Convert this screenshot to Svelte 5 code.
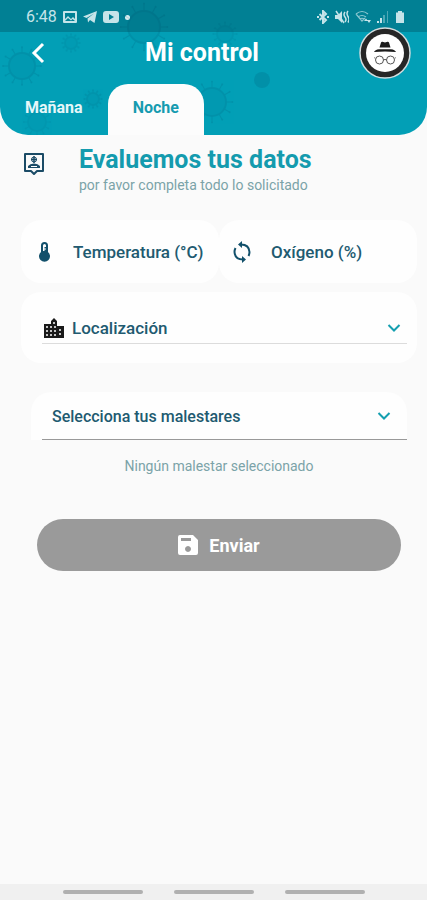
<script>
  // Active period of the day
  let activeTab = $state('noche');

  // Form values
  let temperature = $state('');
  let oxygen = $state('');
  let place = $state('');
  let symptom = $state('');

  const tabs = [
    { id: 'manana', label: 'Mañana' },
    { id: 'noche', label: 'Noche' }
  ];

  const places = ['Casa', 'Trabajo', 'Hospital'];
  const symptoms = ['Fiebre', 'Tos', 'Dolor de cabeza'];

  // Background viruses: centre, radius, opacity
  const viruses = [
    { x: 22, y: 66, r: 13, o: 0.13 },
    { x: 71, y: 43, r: 6, o: 0.08 },
    { x: 144, y: 27, r: 16, o: 0.14 },
    { x: 93, y: 99, r: 6, o: 0.1 },
    { x: 37, y: 122, r: 9, o: 0.07 },
    { x: 212, y: 102, r: 14, o: 0.13 },
    { x: 225, y: 34, r: 8, o: 0.08 }
  ];
  const spikes = [0, 30, 60, 90, 120, 150, 180, 210, 240, 270, 300, 330];

  let canSend = $derived(temperature !== '' && oxygen !== '' && place !== '');
</script>

<div class="screen">
  <header class="top">
    <svg class="viruses" width="427" height="135" viewBox="0 0 427 135" aria-hidden="true">
      {#each viruses as v}
        <g transform="translate({v.x} {v.y})" opacity={v.o} stroke="#003c5c" fill="#003c5c">
          <circle r={v.r} fill-opacity="0.4" stroke-width="2" />
          {#each spikes as angle}
            <g transform="rotate({angle})">
              <line y1={-v.r} y2={-v.r * 1.4} stroke-width="1" />
              <circle cy={-v.r * 1.45} r="1" stroke="none" />
            </g>
          {/each}
        </g>
      {/each}
      <circle cx="262" cy="80" r="8" fill="#003c5c" opacity="0.15" />
    </svg>

    <!-- System status bar -->
    <div class="status">
      <span class="clock">6:48</span>
      <svg width="14" height="12" viewBox="0 0 14 12">
        <path fill="currentColor" fill-rule="evenodd" d="M1 0h12q1 0 1 1v10q0 1-1 1H1q-1 0-1-1V1q0-1 1-1zM2 2v6l3-3 3 3 2-2 2 2V2zM2 10h10L9.500 8 8 9.500 5 7z" />
      </svg>
      <svg width="14" height="12" viewBox="0 0 14 12">
        <path fill="currentColor" d="M14 0 11.500 12 7 9 5 11.500 4.500 7.500 11 2.500 3.500 7 0 5.500z" />
      </svg>
      <svg width="16" height="12" viewBox="0 0 16 12">
        <path fill="currentColor" fill-rule="evenodd" d="M3 0h10q3 0 3 3v6q0 3-3 3H3q-3 0-3-3V3q0-3 3-3zM6 3v6l5-3z" />
      </svg>
      <span class="dot"></span>
      <span class="spacer"></span>
      <svg width="12" height="14" viewBox="0 0 12 14">
        <path fill="none" stroke="currentColor" stroke-width="2" d="M2.500 4 9 10 6 13V1l3 3-6.500 6" />
        <path fill="currentColor" d="M0 6h2v2H0zM10 6h2v2h-2z" />
      </svg>
      <svg width="14" height="14" viewBox="0 0 14 14">
        <path fill="currentColor" d="M0 5h3l4-4v12L3 9H0z" />
        <path fill="none" stroke="currentColor" stroke-width="1.500" d="M1 1l8 12M10 2q-2 2.500 0 5t0 5M13 1q-2 2.500 0 5.500t0 6" />
      </svg>
      <svg width="16" height="14" viewBox="0 0 16 14">
        <path fill="none" stroke="currentColor" stroke-width="1.200" opacity="0.7" d="M1 4q6-5 12 0M3 7q4-3 8 0M5 9q2-1.500 4 0M1 4l6 7 3-3" />
        <path fill="currentColor" d="M9 11l2-2.500 2 2.500zM12 10h4l-2 3z" />
      </svg>
      <svg width="12" height="14" viewBox="0 0 12 14">
        <path fill="currentColor" d="M0 11h2v2H0zM3 8h2v5H3z" />
        <path fill="currentColor" opacity="0.4" d="M6 5h2v8H6zM10 1h1v12h-1z" />
      </svg>
      <svg class="battery" width="10" height="14" viewBox="0 0 10 14">
        <path fill="currentColor" d="M3 1h4v1.500h2V13H1V2.500h2z" />
      </svg>
    </div>

    <div class="bar">
      <button class="back" aria-label="Volver">
        <svg width="14" height="22" viewBox="0 0 14 22">
          <path fill="none" stroke="#fff" stroke-width="3" d="M12 2 3 11l9 9" />
        </svg>
      </button>
      <h1>Mi control</h1>
      <button class="avatar" aria-label="Perfil">
        <svg width="52" height="52" viewBox="0 0 52 52">
          <circle cx="26" cy="26" r="25" fill="#262626" stroke="#d3dcde" stroke-width="1.500" />
          <circle cx="26" cy="26" r="19" fill="#fff" />
          <path fill="#1c1c1c" d="M20.500 20.500 22 15.500q.5-1 1.500-.7l2.500.7 2.500-.7q1-.3 1.500.7l1.500 5zM15 25q1-2.300 5-2.800h12q4 .5 5 2.800-11-1.200-22 0z" />
          <path fill="none" stroke="#555" stroke-width="1" d="M24.500 33q1.500-1.200 3 0M16 31.500l-.5-1M36 31.500l.5-1" />
          <circle cx="20.500" cy="33" r="4" fill="none" stroke="#555" stroke-width="1" />
          <circle cx="31.500" cy="33" r="4" fill="none" stroke="#555" stroke-width="1" />
        </svg>
      </button>
    </div>

    <nav class="tabs">
      {#each tabs as tab}
        <button class="tab" class:active={activeTab === tab.id} onclick={() => (activeTab = tab.id)}>
          {tab.label}
        </button>
      {/each}
    </nav>
  </header>

  <main>
    <section class="intro">
      <svg width="20" height="23" viewBox="0 0 20 23">
        <path fill="none" stroke="#1b4b66" stroke-width="2" stroke-linejoin="round" d="M1 1h18v17h-6l-3 3-3-3H1z" />
        <path fill="#1b4b66" d="M4 15v-2q2-2.500 6-2.500t6 2.500v2z" />
        <path fill="none" stroke="#1b4b66" stroke-width="1.500" d="M10 3v7M7 6.500h6" />
        <circle cx="10" cy="6.500" r="2.500" fill="none" stroke="#1b4b66" />
        <path stroke="#fff" d="M7 13.500h6" />
      </svg>
      <div>
        <h2>Evaluemos tus datos</h2>
        <p>por favor completa todo lo solicitado</p>
      </div>
    </section>

    <form onsubmit={(e) => e.preventDefault()}>
      <div class="measures">
        <label class="measure">
          <svg width="20" height="22" viewBox="0 0 20 22">
            <path fill="#12506b" fill-rule="evenodd" d="M7 4.500a3.500 3.500 0 0 1 7 0V11a5.500 5.500 0 1 1-7 0zM9 4.500V10h1.500V8.500H12V7.500h-1.500V6H12V4.500a1.500 1.500 0 0 0-3 0z" />
          </svg>
          <input type="text" inputmode="decimal" aria-label="Temperatura (°C)" placeholder="Temperatura (°C)" bind:value={temperature} />
        </label>
        <label class="measure">
          <svg width="20" height="22" viewBox="0 0 20 22">
            <path fill="none" stroke="#12506b" stroke-width="2" d="M9 3.500q8 0 8.500 7.500 0 2-1 4M11 18.500q-8 0-8.500-7.500 0-2 1-4" />
            <path fill="#12506b" d="M10 0v7L6 3.500zM10 15v7l4-3.500z" />
          </svg>
          <input type="text" inputmode="numeric" aria-label="Oxígeno (%)" placeholder="Oxígeno (%)" bind:value={oxygen} />
        </label>
      </div>

      <div class="place">
        <div class="place-line">
          <svg width="20" height="20" viewBox="0 0 20 20">
            <path fill="#1a1a1a" d="M0 6h7V3l3-3 3 3v5h7v12H0z" />
            <path fill="#c4c4c4" d="M2 8h2v2H2zM6 8h2v2H6zM2 12h2v2H2zM6 12h2v2H6zM2 16h2v2H2zM6 16h2v2H6zM9 4h2v2H9zM10 8h2v2h-2zM10 12h2v2h-2zM10 16h2v2h-2zM15 11h2v2h-2zM15 15h2v2h-2z" />
          </svg>
          <select aria-label="Localización" bind:value={place}>
            <option value="">Localización</option>
            {#each places as item}
              <option>{item}</option>
            {/each}
          </select>
          <svg class="chevron" width="14" height="8" viewBox="0 0 14 8">
            <path fill="none" stroke="#149fb0" stroke-width="2" d="m1.500 1 5.500 5.500L12.500 1" />
          </svg>
        </div>
      </div>

      <div class="symptoms">
        <select aria-label="Selecciona tus malestares" bind:value={symptom}>
          <option value="">Selecciona tus malestares</option>
          {#each symptoms as item}
            <option>{item}</option>
          {/each}
        </select>
        <svg class="chevron" width="14" height="8" viewBox="0 0 14 8">
          <path fill="none" stroke="#149fb0" stroke-width="2" d="m1.500 1 5.500 5.500L12.500 1" />
        </svg>
      </div>

      <p class="empty">{symptom || 'Ningún malestar seleccionado'}</p>

      <button class="send" class:ready={canSend}>
        <svg width="20" height="20" viewBox="0 0 20 20">
          <path fill="#fff" fill-rule="evenodd" d="M2 0h13l5 5v13q0 2-2 2H2q-2 0-2-2V2q0-2 2-2zM3 3v3h10V3zM10 11a3 3 0 1 0 .01 0z" />
        </svg>
        Enviar
      </button>
    </form>
  </main>

  <!-- System gesture bar -->
  <footer class="gestures">
    <span></span>
    <span></span>
    <span></span>
  </footer>
</div>

<style>
  :global(body) {
    margin: 0;
    background: #fafafa;
  }

  .screen {
    min-height: 100vh;
    display: flex;
    flex-direction: column;
    font-family: Roboto, sans-serif;
    background: #fafafa;
  }

  h1, h2, p {
    margin: 0;
  }

  button, input, select {
    font-family: inherit;
    border: none;
    background: none;
    padding: 0;
    cursor: pointer;
  }

  svg {
    flex-shrink: 0;
  }

  /* Header */
  .top {
    position: relative;
    background: #029fb6;
    border-radius: 0 0 28px 28px;
    overflow: hidden;
  }

  .viruses {
    position: absolute;
    top: 0;
    left: 0;
  }

  .status {
    display: flex;
    align-items: center;
    gap: 6px;
    height: 32px;
    box-sizing: border-box;
    padding: 2px 22px 0 26px;
    background: rgba(0, 50, 60, 0.28);
    color: #c5e4e9;
  }

  .clock {
    font-size: 16px;
    line-height: 20px;
  }

  .dot {
    width: 5px;
    height: 5px;
    border-radius: 50%;
    background: #d8eef1;
  }

  .spacer {
    flex: 1;
  }

  .bar {
    position: relative;
    display: flex;
    align-items: center;
    justify-content: space-between;
    height: 42px;
    padding: 0 16px 0 31px;
  }

  .back {
    display: flex;
  }

  h1 {
    font-size: 25px;
    line-height: 30px;
    font-weight: 700;
    color: #fff;
  }

  .avatar {
    display: flex;
  }

  .tabs {
    position: relative;
    display: flex;
    padding-top: 10px;
  }

  .tab {
    height: 51px;
    padding: 0 25px 4px;
    font-size: 16px;
    font-weight: 700;
    color: #e6f7f9;
  }

  .tab.active {
    border-radius: 20px 20px 0 0;
    background: #fcfcfc;
    color: #169bb0;
  }

  /* Content */
  main {
    flex: 1;
    padding: 10px 10px 20px 21px;
  }

  .intro {
    display: flex;
    gap: 35px;
    padding: 0 3px;
  }

  .intro svg {
    margin-top: 8px;
  }

  h2 {
    font-size: 25px;
    line-height: 30px;
    font-weight: 700;
    color: #149bae;
  }

  .intro p,
  .empty {
    font-size: 14px;
    line-height: 20px;
    color: #7ba3a8;
  }

  .measures {
    display: flex;
    margin-top: 25px;
  }

  .measure {
    flex: 1;
    display: flex;
    align-items: center;
    gap: 19px;
    height: 63px;
    min-width: 0;
    box-sizing: border-box;
    padding-left: 13px;
    border-radius: 20px;
    background: #fefefe;
  }

  input,
  select {
    flex: 1;
    min-width: 0;
    font-size: 17px;
    font-weight: 500;
    color: #215a70;
    outline: none;
  }

  input::placeholder {
    color: #215a70;
    opacity: 1;
  }

  select {
    appearance: none;
  }

  .place {
    margin-top: 9px;
    padding: 20px 10px 19px 21px;
    border-radius: 20px;
    background: #fefefe;
  }

  .place-line {
    display: flex;
    align-items: center;
    gap: 8px;
    height: 31px;
    padding: 0 6px 0 2px;
    border-bottom: 1px solid #dcdcdc;
  }

  .symptoms {
    display: flex;
    align-items: center;
    height: 48px;
    margin: 29px 10px 0;
    padding: 0 16px 0 21px;
    border-radius: 20px 20px 0 0;
    background: linear-gradient(#999, #999) 100% 100% / calc(100% - 11px) 1px no-repeat #fefefe;
  }

  .symptoms select {
    font-size: 16px;
  }

  .empty {
    margin-top: 16px;
    text-align: center;
  }

  .send {
    display: flex;
    align-items: center;
    justify-content: center;
    gap: 11px;
    width: calc(100% - 32px);
    height: 52px;
    margin: 43px 16px 0;
    border-radius: 26px;
    background: #9a9a9a;
    color: #fff;
    font-size: 18px;
    font-weight: 700;
  }

  .send.ready {
    background: #029fb6;
  }

  .gestures {
    display: flex;
    justify-content: center;
    align-items: center;
    gap: 31px;
    height: 16px;
    background: #f0f0f0;
  }

  .gestures span {
    width: 80px;
    height: 4px;
    border-radius: 2px;
    background: #b0b0b0;
  }
</style>
